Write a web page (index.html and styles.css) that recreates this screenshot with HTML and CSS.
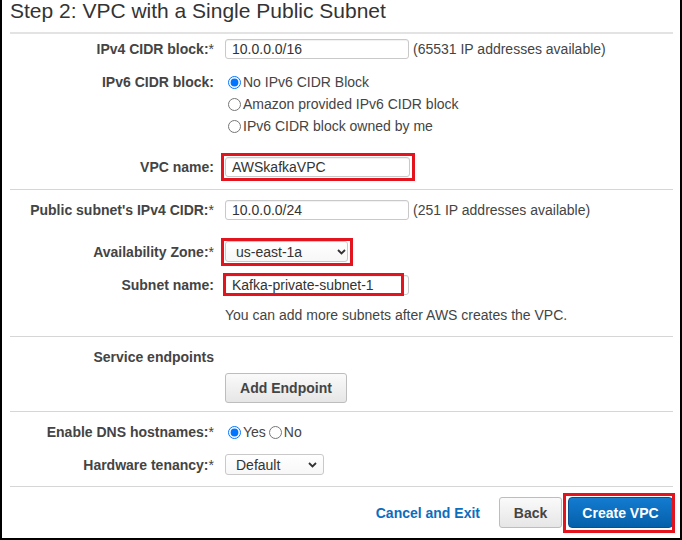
FILE: index.html
```html
<!DOCTYPE html>
<html>
<head>
<meta charset="utf-8">
<link rel="stylesheet" href="styles.css">
</head>
<body>
<div class="page">
  <h1 class="title">Step 2: VPC with a Single Public Subnet</h1>

  <section class="sec sec-first">
    <div class="row">
      <div class="lbl">IPv4 CIDR block:<span class="req">*</span></div>
      <div class="fld"><input class="txt" type="text" value="10.0.0.0/16"><span class="note">(65531 IP addresses available)</span></div>
    </div>
    <div class="row row-top row-ipv6">
      <div class="lbl lbl-tall">IPv6 CIDR block:</div>
      <div class="opts">
        <label class="opt"><input class="rad" type="radio" name="v6" checked>No IPv6 CIDR Block</label>
        <label class="opt"><input class="rad" type="radio" name="v6">Amazon provided IPv6 CIDR block</label>
        <label class="opt"><input class="rad" type="radio" name="v6">IPv6 CIDR block owned by me</label>
      </div>
    </div>
    <div class="row row-vpcname">
      <div class="lbl">VPC name:</div>
      <div class="fld"><span class="hl-wrap"><input class="txt txt-vpc" type="text" value="AWSkafkaVPC"><span class="hl hl-vpc"></span></span></div>
    </div>
  </section>

  <section class="sec sec-subnet">
    <div class="row">
      <div class="lbl">Public subnet's IPv4 CIDR:<span class="req">*</span></div>
      <div class="fld"><input class="txt" type="text" value="10.0.0.0/24"><span class="note">(251 IP addresses available)</span></div>
    </div>
    <div class="row row-az">
      <div class="lbl">Availability Zone:<span class="req">*</span></div>
      <div class="fld"><span class="hl-wrap"><span class="sel sel-az">us-east-1a<svg class="chev" width="9" height="6" viewBox="0 0 9 6"><path d="M1 1L4.5 4.5L8 1" fill="none" stroke="#333" stroke-width="1.8"/></svg></span><span class="hl hl-az"></span></span></div>
    </div>
    <div class="row row-subname">
      <div class="lbl">Subnet name:</div>
      <div class="fld"><span class="hl-wrap"><input class="txt" type="text" value="Kafka-private-subnet-1"><span class="hl hl-sub"></span></span></div>
    </div>
    <div class="row row-hint">
      <div></div>
      <div class="hint">You can add more subnets after AWS creates the VPC.</div>
    </div>
  </section>

  <section class="sec sec-endpoints">
    <div class="row">
      <div class="lbl">Service endpoints</div>
      <div></div>
    </div>
    <div class="row row-addep">
      <div></div>
      <div class="fld"><button class="btn btn-add">Add Endpoint</button></div>
    </div>
  </section>

  <section class="sec sec-dns">
    <div class="row">
      <div class="lbl">Enable DNS hostnames:<span class="req">*</span></div>
      <div class="inline-opts">
        <label class="iopt"><input class="rad" type="radio" name="dns" checked>Yes</label>
        <label class="iopt"><input class="rad" type="radio" name="dns">No</label>
      </div>
    </div>
    <div class="row row-tenancy">
      <div class="lbl">Hardware tenancy:<span class="req">*</span></div>
      <div class="fld"><span class="sel sel-ten">Default<svg class="chev" width="9" height="6" viewBox="0 0 9 6"><path d="M1 1L4.5 4.5L8 1" fill="none" stroke="#333" stroke-width="1.8"/></svg></span></div>
    </div>
  </section>

  <footer class="sec foot">
    <a class="link" href="#">Cancel and Exit</a>
    <button class="btn btn-back">Back</button>
    <span class="hl-wrap"><button class="btn btn-primary">Create VPC</button><span class="hl hl-create"></span></span>
  </footer>
</div>
</body>
</html>
```

FILE: styles.css
```css
html, body {
  margin: 0;
  padding: 0;
  background: #fff;
}

body {
  font-family: "Liberation Sans", Arial, sans-serif;
  font-size: 14px;
  color: #444;
}

.page {
  width: 682px;
  height: 540px;
  box-sizing: border-box;
  border: 2px solid #000;
  border-top: 0;
  padding: 0 7px 0 8px;
  overflow: hidden;
}

.title {
  margin: 0 0 10px 0;
  font-size: 21px;
  line-height: 22px;
  font-weight: normal;
  color: #333;
}

.sec {
  border-top: 1px solid #d6d6d6;
}

.sec-first {
  border-top: 2px solid #e3e3e3;
  padding: 5px 0 12px;
}

.sec-subnet {
  padding: 10px 0 13px;
}

.sec-endpoints {
  padding: 12px 0 8px;
}

.sec-dns {
  padding: 12px 0 11px;
}

.row {
  display: grid;
  grid-template-columns: 204px 1fr;
  column-gap: 11px;
  align-items: center;
}

.row-top {
  align-items: start;
}

.row-ipv6 { margin-top: 12px; }
.row-vpcname { margin-top: 20px; }
.row-az { margin-top: 21px; }
.row-subname { margin-top: 13px; }
.row-hint { margin-top: 12px; }
.row-addep { margin-top: 8px; }
.row-tenancy { margin-top: 14px; }

.lbl {
  text-align: right;
  font-weight: bold;
  line-height: 16px;
  color: #444;
  white-space: nowrap;
}

.lbl-tall {
  line-height: 22px;
}

.req {
  font-weight: normal;
}

.fld {
  display: flex;
  align-items: center;
  line-height: 16px;
}

.txt {
  box-sizing: border-box;
  width: 184px;
  height: 20px;
  margin: 0;
  padding: 0 6px;
  border: 1px solid #c9c9c9;
  border-radius: 3px;
  background: #fff;
  box-shadow: inset 0 1px 1px rgba(0, 0, 0, 0.06);
  font-family: "Liberation Sans", Arial, sans-serif;
  font-size: 14px;
  color: #333;
  outline: none;
}

.txt-vpc {
  width: 185px;
}

.note {
  margin-left: 4px;
  color: #444;
  white-space: nowrap;
}

.opts {
  display: flex;
  flex-direction: column;
}

.opt {
  display: flex;
  align-items: center;
  height: 22px;
  line-height: 22px;
  color: #444;
  white-space: nowrap;
}

.rad {
  width: 13px;
  height: 13px;
  margin: 0 2px 0 3px;
  flex: none;
}

.inline-opts {
  display: flex;
  align-items: center;
  line-height: 16px;
}

.iopt {
  display: flex;
  align-items: center;
  color: #444;
}

.hint {
  line-height: 16px;
  color: #444;
}

.sel {
  box-sizing: border-box;
  display: inline-flex;
  align-items: center;
  justify-content: space-between;
  height: 21px;
  padding: 0 6px 0 10px;
  border: 1px solid #c9c9c9;
  border-radius: 3px;
  background: linear-gradient(#fff, #f7f7f7);
  color: #333;
  line-height: 16px;
}

.sel-az { width: 123px; padding-right: 1px; }
.sel-ten { width: 99px; }

.chev {
  display: block;
  flex: none;
}

.sel-az .chev { margin-right: 0; }

.hl-wrap {
  position: relative;
  display: inline-flex;
}

.hl {
  position: absolute;
  border: 3px solid #e3141e;
  pointer-events: none;
}

.hl-vpc { left: -4px; top: -4px; right: -5px; bottom: -4px; }
.hl-az { left: -4px; top: -3px; right: -5px; bottom: -4px; }
.hl-sub { left: -2px; top: -2px; width: 175px; height: 17px; }
.hl-create { left: -5px; top: -4px; right: -2px; bottom: -5px; }

.btn {
  box-sizing: border-box;
  margin: 0;
  font-family: "Liberation Sans", Arial, sans-serif;
  font-size: 14px;
  font-weight: bold;
  border-radius: 3px;
  cursor: pointer;
}

.btn-add,
.btn-back {
  border: 1px solid #bdbdbd;
  background: linear-gradient(#fafafa, #e6e6e6);
  color: #444;
}

.btn-add {
  width: 122px;
  height: 30px;
}

.foot {
  display: flex;
  justify-content: flex-end;
  align-items: center;
  padding-top: 10px;
}

.link {
  font-weight: bold;
  color: #0d6dbd;
  text-decoration: none;
  margin-right: 19px;
}

.btn-back {
  width: 63px;
  height: 31px;
  margin-right: 6px;
}

.btn-primary {
  width: 105px;
  height: 31px;
  border: 1px solid #0a4f8f;
  border-radius: 4px;
  background: linear-gradient(#137bd0, #0560aa);
  color: #fff;
}
```
